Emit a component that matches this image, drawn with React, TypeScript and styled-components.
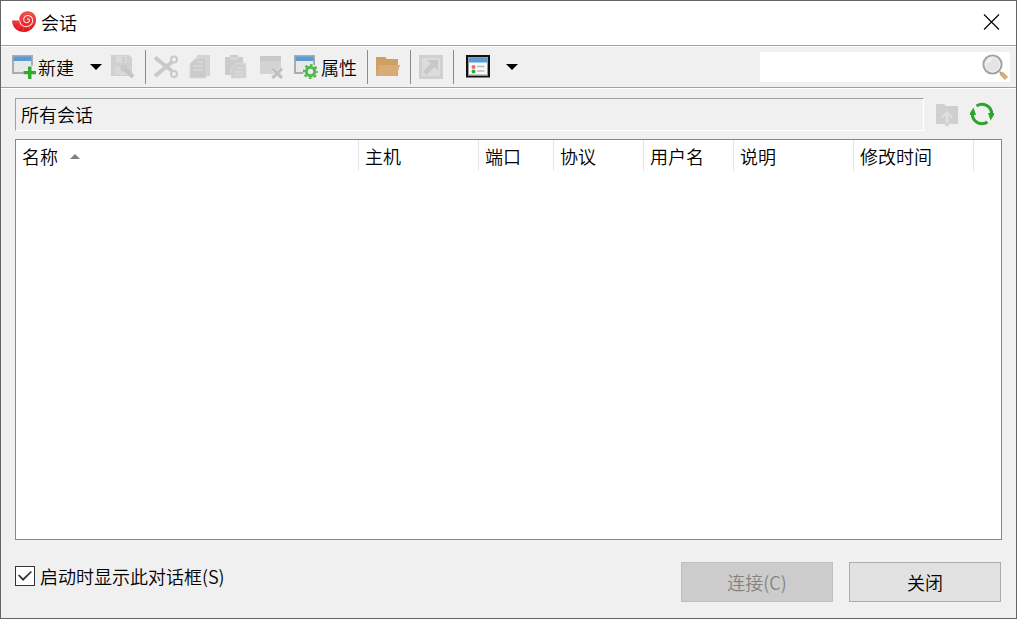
import React, { useState } from 'react';
import styled, { createGlobalStyle } from 'styled-components';

const GlobalStyle = createGlobalStyle`
  *, *::before, *::after { box-sizing: border-box; }
  body { margin: 0; }
  body, button, input {
    font-family: "Noto Sans CJK SC", "Noto Sans", sans-serif;
    font-size: 18px;
    line-height: 24px;
    font-weight: 350;
    color: #000;
  }
`;

const Dialog = styled.main`
  display: flex;
  flex-direction: column;
  min-height: 100vh;
  border: 1px solid #666;
  background: #f0f0f0;
`;

const TitleBar = styled.header`
  display: flex;
  align-items: center;
  height: 44px;
  padding: 0 16px 2px 11px;
  background: #fff;
`;

const Title = styled.h1`
  flex: 1;
  margin: 0 0 0 4px;
  font-size: 18px;
  font-weight: inherit;
`;

const PlainButton = styled.button<{ $gap?: number }>`
  display: flex;
  align-items: center;
  gap: ${(p) => p.$gap ?? 0}px;
  padding: 0;
  border: 0;
  background: none;
  white-space: nowrap;
  svg { display: block; flex: none; }
`;

const Toolbar = styled.div`
  display: flex;
  align-items: center;
  height: 43px;
  padding: 0 6px 0 11px;
  border-top: 1px solid #a0a0a0;
  border-bottom: 1px solid #a0a0a0;
  box-shadow: inset 0 1px #fff, 0 1px #fff;
`;

const ToolGroup = styled.div<{ $gap?: number }>`
  display: flex;
  align-items: center;
  gap: ${(p) => p.$gap ?? 11}px;
`;

const Separator = styled.div<{ $after?: number }>`
  width: 1px;
  height: 34px;
  margin: 0 ${(p) => p.$after ?? 8}px 0 10px;
  background: #8c8c8c;
`;

const SearchBox = styled.label`
  display: flex;
  align-items: center;
  width: 250px;
  height: 30px;
  margin-left: auto;
  padding-right: 2px;
  background: #fff;
  svg { flex: none; }
`;

const SearchInput = styled.input`
  flex: 1;
  min-width: 0;
  height: 30px;
  padding: 0 4px;
  border: 0;
  outline: 0;
  background: transparent;
`;

const PathRow = styled.div`
  display: flex;
  align-items: center;
  gap: 11px;
  padding: 10px 22px 8px 14px;
  button { padding-bottom: 2px; }
`;

const PathField = styled.input`
  flex: 1;
  min-width: 0;
  height: 33px;
  padding: 0 5px 2px;
  border: 1px solid;
  border-color: #a0a0a0 #fff #fff #a0a0a0;
  background: #f0f0f0;
  outline: 0;
`;

const ListBox = styled.section`
  flex: 1;
  margin: 0 14px;
  border: 1px solid #828790;
  background: #fff;
  overflow: hidden;
`;

const SessionTable = styled.table`
  width: 100%;
  table-layout: fixed;
  border-collapse: separate;
  border-spacing: 0;
`;

const HeadCell = styled.th<{ $width?: number }>`
  width: ${(p) => (p.$width ? `${p.$width}px` : 'auto')};
  height: 31px;
  padding: 0 0 0 6px;
  border-right: 1px solid #e5e5e5;
  text-align: left;
  font-weight: inherit;
  white-space: nowrap;
  svg { margin-left: 12px; vertical-align: 5px; }
`;

const FillerCell = styled.td`
  padding: 0;
`;

const Footer = styled.footer`
  display: flex;
  align-items: flex-start;
  gap: 16px;
  padding: 22px 15px 16px 14px;
`;

const CheckLabel = styled.label`
  display: flex;
  align-items: center;
  gap: 5px;
  height: 28px;
  margin-right: auto;
`;

const CheckBox = styled.input`
  appearance: none;
  display: grid;
  place-items: center;
  width: 20px;
  height: 20px;
  margin: 0;
  border: 1px solid #333;
  background: #fff;
  &:checked::before {
    content: '';
    width: 14px;
    height: 10px;
    background: #333;
    clip-path: polygon(0 46%, 9% 36%, 36% 72%, 92% 0, 100% 10%, 36% 100%);
  }
`;

const PushButton = styled.button`
  width: 152px;
  height: 40px;
  padding: 0;
  border: 1px solid #adadad;
  background: #e1e1e1;
  &:disabled {
    border-color: #bfbfbf;
    background: #ccc;
    color: #838383;
  }
`;

const Logo = () => (
  <svg width="25" height="22" viewBox="0 0 25 22" aria-hidden="true">
    <defs>
      <linearGradient id="shell" x1="0" y1="0" x2="0" y2="1">
        <stop offset="0" stopColor="#f4534c" />
        <stop offset="1" stopColor="#e01018" />
      </linearGradient>
    </defs>
    <path d="M0 9.500h7.500C6.500 4 11 0 15.500 .200 20.500 0 24.500 4 24 9c0 3-1 5-2.500 7-2.500 3.500-6 5-9.500 5C5.500 21 .500 17 0 9.500z" fill="url(#shell)" />
    <path d="M7.500 9.500C8 14 11.500 16 15 15.500c4-.500 6.500-4 5.500-7.500-1-3.500-5-4.500-7.500-2.500-2 1.700-1.700 5 .500 6 2 .800 4-.500 4-2.200 0-1.300-1.500-2-2.300-1" fill="none" stroke="#ffe3e1" strokeWidth="1.100" />
    <path d="M2.500 12 8 11.500M5 17l4.500-3.500M11 20l1.500-4.500M17.500 18.500 16.500 15.500M22 13l-2.500-1" stroke="#f0605c" strokeWidth=".6" />
  </svg>
);

const CloseIcon = () => (
  <svg width="17" height="16" viewBox="0 0 17 16" aria-hidden="true">
    <path d="M1 .500 16 15.500M16 .500 1 15.500" stroke="#000" strokeWidth="1.100" />
  </svg>
);

const Caret = () => (
  <svg width="12" height="6" viewBox="0 0 12 6" aria-hidden="true">
    <path d="M0 0h12L6 6z" fill="#000" />
  </svg>
);

const SortMark = () => (
  <svg width="10" height="5" viewBox="0 0 10 5" aria-hidden="true">
    <path d="M5 0l5 5H0z" fill="#808080" />
  </svg>
);

const Icon = ({ children }: { children: React.ReactNode }) => (
  <svg width="24" height="24" viewBox="0 0 24 24" aria-hidden="true">{children}</svg>
);

const MiniWindow = () => (
  <>
    <path d="M0 0h21v19H0z" fill="#a9adaf" />
    <path d="M1.500 1.500h18V6h-18z" fill="#5b9bd5" />
    <path d="M2 6h17v11H2z" fill="#e8e8e8" />
  </>
);

const NewIcon = () => (
  <Icon>
    <MiniWindow />
    <path d="M16 10.500h5V15h3v5h-3v4h-5v-4h-4.500v-5H16z" fill="#f0f0f0" />
    <path d="M16 11.500h3.500V16H24v3.200h-4.500V24H16v-4.800h-4.500V16H16z" fill="#2eab2e" />
  </Icon>
);

const SaveIcon = () => (
  <Icon>
    <path d="M0 0h18l3 3v18H0z" fill="#d0d0d0" />
    <path d="M5 1h11v7H5zM4 12h13v8H4z" fill="#d9d9d9" />
    <path d="M11 2h3v5h-3z" fill="#cdcdcd" />
    <circle cx="13" cy="13" r="3.500" fill="#c9c9c9" />
    <path d="M14 14l8 8" stroke="#c5c5c5" strokeWidth="4" />
  </Icon>
);

const CutIcon = () => (
  <Icon>
    <path d="M1 2.500 18 16M1 21 18 7" fill="none" stroke="#c9c9c9" strokeWidth="4" />
    <circle cx="20" cy="4.500" r="3" fill="#f0f0f0" stroke="#c9c9c9" strokeWidth="2" />
    <circle cx="20" cy="19" r="3" fill="#f0f0f0" stroke="#c9c9c9" strokeWidth="2" />
  </Icon>
);

const CopyIcon = () => (
  <Icon>
    <path d="M8 0h13v21H8z" fill="#d3d3d3" />
    <path d="M1 9l6-6h10v20H1z" fill="#cbcbcb" stroke="#d8d8d8" />
    <path d="M8 7h6M4 11h10M4 15h10" stroke="#dadada" strokeWidth="1.500" />
  </Icon>
);

const PasteIcon = () => (
  <Icon>
    <path d="M1 2h5V0h8v2h5v18H1z" fill="#cbcbcb" />
    <path d="M6 2h8v3H6z" fill="#d6d6d6" />
    <path d="M7 13l5-5h10v15H7z" fill="#cfcfcf" stroke="#dcdcdc" />
    <path d="M13 13h6M10 17h9M10 20h9" stroke="#dadada" strokeWidth="1.500" />
  </Icon>
);

const DeleteIcon = () => (
  <Icon>
    <path d="M1 1h21v18H1z" fill="#d3d3d3" />
    <path d="M1 1h21v5H1z" fill="#c9c9c9" />
    <path d="M13.500 13.500l9 9M22.500 13.500l-9 9" stroke="#e4e4e4" strokeWidth="4.500" />
    <path d="M13.500 13.500l9.500 9.500M23 13.500 13.500 23" stroke="#c0c0c0" strokeWidth="3" />
  </Icon>
);

const PropertiesIcon = () => (
  <Icon>
    <MiniWindow />
    <circle cx="16.500" cy="16.500" r="7.500" fill="#e6eee5" />
    <circle cx="16.500" cy="16.500" r="4.200" fill="none" stroke="#53b84b" strokeWidth="3" />
    <circle cx="16.500" cy="16.500" r="6.400" fill="none" stroke="#53b84b" strokeWidth="2.400" strokeDasharray="2.500 2.527" strokeDashoffset="1.250" />
  </Icon>
);

const FolderIcon = () => (
  <Icon>
    <path d="M0 2h9l2 2h11v17H0z" fill="#cf9f64" />
    <path d="M3 10h21l-3.500 11H0z" fill="#d8ac74" />
  </Icon>
);

const ShortcutIcon = () => (
  <Icon>
    <path d="M1.500 1.500h21v21h-21z" fill="#dcdcdc" stroke="#d0d0d0" strokeWidth="3" />
    <path d="M8 5h11v10.500l-3.500-3.500-8 8L4 17l8-8.500z" fill="#c8c8c8" />
  </Icon>
);

const ViewIcon = () => (
  <Icon>
    <path d="M1 1h22v20.500H1z" fill="#fafafa" stroke="#111" strokeWidth="2" />
    <path d="M2.500 2.500h19V20h-19z" fill="none" stroke="#9a9a9a" />
    <path d="M3 3h18v4.500H3z" fill="#5b9bd5" />
    <circle cx="7.500" cy="12" r="2" fill="#ee6b70" />
    <circle cx="7.500" cy="16.500" r="2" fill="#35a935" />
    <path d="M11 11.500h7.500M11 16h7.500" stroke="#bcbcbc" strokeWidth="1.500" />
  </Icon>
);

const SearchIcon = () => (
  <svg width="26" height="26" viewBox="0 0 26 26" aria-hidden="true">
    <path d="M18 18l2 2" stroke="#999" strokeWidth="2" />
    <path d="M19 19l5.500 5.500" stroke="#d8ab78" strokeWidth="4.500" />
    <circle cx="10.500" cy="10.500" r="9" fill="#e4e4e4" stroke="#a0a4a6" strokeWidth="2.200" />
    <circle cx="10.500" cy="10.500" r="7.500" fill="none" stroke="#f5f5f5" />
    <path d="M4.500 9.500C5 6.500 7 4.500 10 4.500 9 7 7 9 4.500 9.500z" fill="#f6f6f6" />
  </svg>
);

const UpFolderIcon = () => (
  <Icon>
    <path d="M1 2h8l2 2h12v18H1z" fill="#cfcfcf" />
    <path d="M12 9l6 6-1.500 1.500-3-3V22h-3v-8.500l-3 3L6 15z" fill="#dfdfdf" />
    <path d="M10 21h4v3h-4z" fill="#d3d3d3" />
  </Icon>
);

const RefreshIcon = () => (
  <Icon>
    <g fill="none" stroke="#2ba52b" strokeWidth="3">
      <path d="M6.500 3.900A9.800 9.800 0 0 1 21.700 12" />
      <path d="M17.500 20.100A9.800 9.800 0 0 1 2.300 12" />
    </g>
    <path d="M18 11h6v2l-3.500 5.500zM6 13H0v-2l3.500-5.500z" fill="#2ba52b" />
  </Icon>
);

const columns = [
  { name: '名称', width: 343, sorted: true },
  { name: '主机', width: 120 },
  { name: '端口', width: 75 },
  { name: '协议', width: 90 },
  { name: '用户名', width: 90 },
  { name: '说明', width: 120 },
  { name: '修改时间', width: 120 },
];

export default function App() {
  const [showOnStart, setShowOnStart] = useState(true);

  return (
    <>
      <GlobalStyle />
      <Dialog lang="zh-CN">
        <TitleBar>
          <Logo />
          <Title>会话</Title>
          <PlainButton type="button" aria-label="关闭"><CloseIcon /></PlainButton>
        </TitleBar>

        <Toolbar role="toolbar">
          <ToolGroup $gap={9}>
            <ToolGroup $gap={16}>
              <PlainButton type="button" $gap={2}><NewIcon />新建</PlainButton>
              <PlainButton type="button" aria-label="新建选项"><Caret /></PlainButton>
            </ToolGroup>
            <PlainButton type="button" disabled aria-label="另存为"><SaveIcon /></PlainButton>
          </ToolGroup>
          <Separator />
          <ToolGroup>
            <PlainButton type="button" disabled aria-label="剪切"><CutIcon /></PlainButton>
            <PlainButton type="button" disabled aria-label="复制"><CopyIcon /></PlainButton>
            <PlainButton type="button" disabled aria-label="粘贴"><PasteIcon /></PlainButton>
            <PlainButton type="button" disabled aria-label="删除"><DeleteIcon /></PlainButton>
            <PlainButton type="button" $gap={3}><PropertiesIcon />属性</PlainButton>
          </ToolGroup>
          <Separator />
          <PlainButton type="button" aria-label="打开文件夹"><FolderIcon /></PlainButton>
          <Separator />
          <PlainButton type="button" disabled aria-label="创建快捷方式"><ShortcutIcon /></PlainButton>
          <Separator $after={12} />
          <ToolGroup $gap={16}>
            <PlainButton type="button" aria-label="查看"><ViewIcon /></PlainButton>
            <PlainButton type="button" aria-label="查看选项"><Caret /></PlainButton>
          </ToolGroup>
          <SearchBox>
            <SearchInput type="text" aria-label="搜索" />
            <SearchIcon />
          </SearchBox>
        </Toolbar>

        <PathRow>
          <PathField type="text" readOnly value="所有会话" aria-label="路径" />
          <PlainButton type="button" disabled aria-label="上一级"><UpFolderIcon /></PlainButton>
          <PlainButton type="button" aria-label="刷新"><RefreshIcon /></PlainButton>
        </PathRow>

        <ListBox>
          <SessionTable>
            <thead>
              <tr>
                {columns.map((c) => (
                  <HeadCell key={c.name} $width={c.width} scope="col">
                    {c.name}
                    {c.sorted && <SortMark />}
                  </HeadCell>
                ))}
                <FillerCell />
              </tr>
            </thead>
          </SessionTable>
        </ListBox>

        <Footer>
          <CheckLabel>
            <CheckBox type="checkbox" checked={showOnStart} onChange={(e) => setShowOnStart(e.target.checked)} />
            启动时显示此对话框(S)
          </CheckLabel>
          <PushButton type="button" disabled>连接(C)</PushButton>
          <PushButton type="button">关闭</PushButton>
        </Footer>
      </Dialog>
    </>
  );
}
